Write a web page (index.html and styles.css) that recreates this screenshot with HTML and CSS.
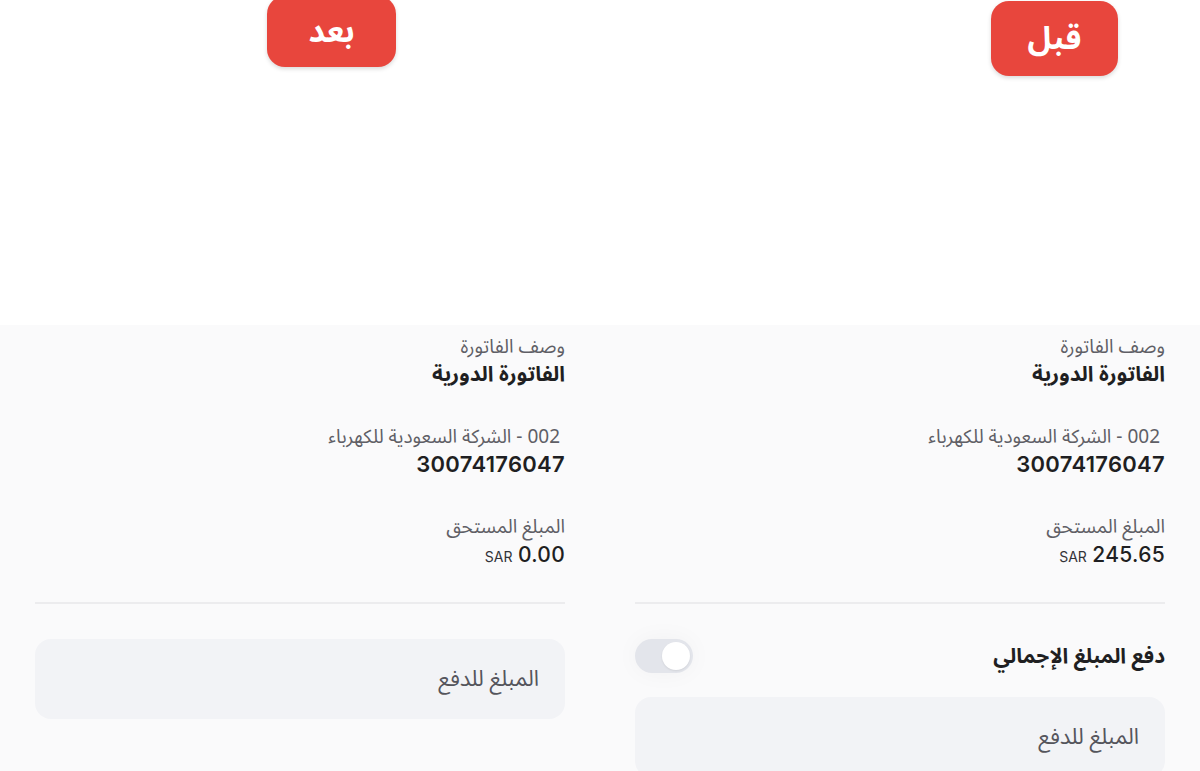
FILE: index.html
```html
<!DOCTYPE html>
<html lang="ar">
<head>
    <meta charset="UTF-8">
    <meta name="viewport" content="width=device-width, initial-scale=1.0">
    <title>قبل وبعد</title>
    <link rel="stylesheet" href="styles.css">
</head>
<body>

    <div class="compare">

        <!-- After -->
        <div class="panel">
            <div class="panel-top">
                <span class="badge badge-after">بعد</span>
            </div>
            <div class="sheet" dir="rtl">
                <div class="field">
                    <div class="field-label">وصف الفاتورة</div>
                    <div class="field-value">الفاتورة الدورية</div>
                </div>
                <div class="field">
                    <div class="field-label field-label-indent">002 - الشركة السعودية للكهرباء</div>
                    <div class="field-value number">30074176047</div>
                </div>
                <div class="field">
                    <div class="field-label">المبلغ المستحق</div>
                    <div class="field-value amount"><span class="num">0.00</span> <span class="currency">SAR</span></div>
                </div>
                <hr class="divider">
                <div class="amount-input">المبلغ للدفع</div>
            </div>
        </div>

        <!-- Before -->
        <div class="panel">
            <div class="panel-top">
                <span class="badge badge-before">قبل</span>
            </div>
            <div class="sheet" dir="rtl">
                <div class="field">
                    <div class="field-label">وصف الفاتورة</div>
                    <div class="field-value">الفاتورة الدورية</div>
                </div>
                <div class="field">
                    <div class="field-label field-label-indent">002 - الشركة السعودية للكهرباء</div>
                    <div class="field-value number">30074176047</div>
                </div>
                <div class="field">
                    <div class="field-label">المبلغ المستحق</div>
                    <div class="field-value amount"><span class="num">245.65</span> <span class="currency">SAR</span></div>
                </div>
                <hr class="divider">
                <div class="toggle-row">
                    <span class="toggle-label">دفع المبلغ الإجمالي</span>
                    <span class="toggle"><span class="knob"></span></span>
                </div>
                <div class="amount-input">المبلغ للدفع</div>
            </div>
        </div>

    </div>

</body>
</html>
```

FILE: styles.css
```css
body {
    margin: 0;
    background: #ffffff;
    font-family: "Noto Sans Arabic", "DejaVu Sans", sans-serif;
    overflow: hidden;
}

.compare {
    display: flex;
    width: 1200px;
    height: 771px;
}

.panel {
    width: 600px;
    display: flex;
    flex-direction: column;
    overflow: hidden;
}

.panel-top {
    height: 325px;
    flex-shrink: 0;
    background: #ffffff;
}

.badge {
    display: inline-flex;
    align-items: center;
    justify-content: center;
    background: #e8463d;
    color: #ffffff;
    font-weight: bold;
    font-size: 32px;
    border-radius: 18px;
    height: 75px;
    box-shadow: 0 2px 4px rgba(0, 0, 0, 0.15);
}

.badge-after {
    width: 129px;
    height: 71px;
    margin-left: 267px;
    margin-top: -4px;
}

.badge-before {
    width: 127px;
    margin-left: 391px;
    margin-top: 1px;
}

.sheet {
    flex: 1 0 auto;
    background: #fafafb;
    padding: 9px 35px 0 35px;
}

.field {
    margin-bottom: 35px;
}

.field-label {
    font-size: 19px;
    line-height: 26px;
    color: #5f5f66;
}

.field-label-indent {
    padding-right: 5px;
}

.field-value {
    font-size: 21px;
    line-height: 29px;
    font-weight: bold;
    color: #1f1f22;
}

.number,
.amount .num {
    font-family: "Inter", "Liberation Sans", sans-serif;
    font-size: 22px;
    font-weight: 600;
    letter-spacing: 0.3px;
}

.amount .num {
    font-size: 21px;
    font-weight: 500;
}

.currency {
    font-family: "Inter", "Liberation Sans", sans-serif;
    font-size: 14px;
    font-weight: 400;
    color: #333338;
}

.divider {
    border: none;
    border-top: 2px solid #ececee;
    margin: -4px 0 0 0;
}

.amount-input {
    height: 80px;
    background: #f2f3f6;
    border-radius: 16px;
    margin-top: 35px;
    display: flex;
    align-items: center;
    padding-right: 26px;
    font-size: 22px;
    color: #55555c;
}

.toggle-row {
    display: flex;
    align-items: center;
    justify-content: space-between;
    margin-top: 35px;
    height: 34px;
}

.toggle-label {
    font-size: 21px;
    font-weight: bold;
    color: #1f1f22;
}

.toggle {
    width: 58px;
    height: 34px;
    border-radius: 17px;
    background: #e3e5eb;
    display: flex;
    align-items: center;
    justify-content: flex-end;
    padding: 0 3px;
    box-sizing: border-box;
    direction: ltr;
    box-shadow: 0 0 24px rgba(0, 0, 0, 0.04);
}

.knob {
    width: 28px;
    height: 28px;
    border-radius: 50%;
    background: #ffffff;
    box-shadow: 0 1px 2px rgba(0, 0, 0, 0.08);
}

.toggle-row + .amount-input {
    margin-top: 24px;
}
```
